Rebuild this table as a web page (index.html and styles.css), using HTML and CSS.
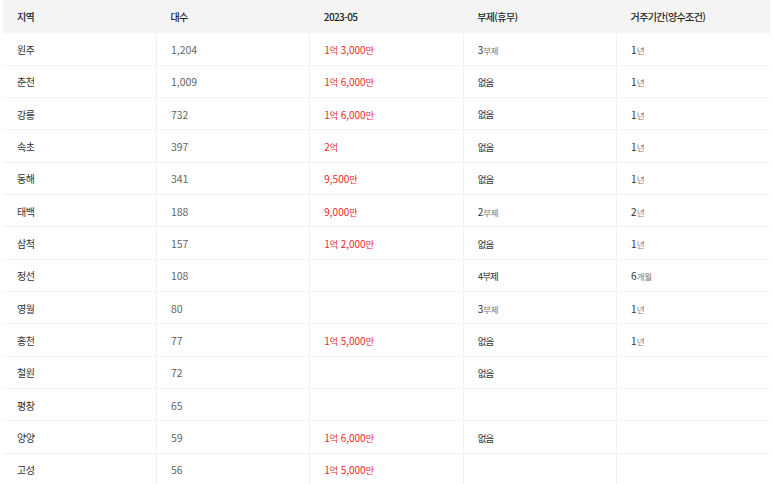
FILE: index.html
```html
<!DOCTYPE html>
<html lang="ko">
<head>
<meta charset="utf-8">
<link rel="stylesheet" href="styles.css">
</head>
<body>
<table class="tbl">
  <thead>
    <tr><th>지역</th><th>대수</th><th>2023-05</th><th>부제(휴무)</th><th>거주기간(양수조건)</th></tr>
  </thead>
  <tbody>
    <tr><td class="rg">원주</td><td class="num">1,204</td><td class="price">1<small>억</small> 3,000<small>만</small></td><td class="dk">3<span class="u">부제</span></td><td class="dk">1<span class="u">년</span></td></tr>
    <tr><td class="rg">춘천</td><td class="num">1,009</td><td class="price">1<small>억</small> 6,000<small>만</small></td><td class="dk ko">없음</td><td class="dk">1<span class="u">년</span></td></tr>
    <tr><td class="rg">강릉</td><td class="num">732</td><td class="price">1<small>억</small> 6,000<small>만</small></td><td class="dk ko">없음</td><td class="dk">1<span class="u">년</span></td></tr>
    <tr><td class="rg">속초</td><td class="num">397</td><td class="price">2<small>억</small></td><td class="dk ko">없음</td><td class="dk">1<span class="u">년</span></td></tr>
    <tr><td class="rg">동해</td><td class="num">341</td><td class="price">9,500<small>만</small></td><td class="dk ko">없음</td><td class="dk">1<span class="u">년</span></td></tr>
    <tr><td class="rg">태백</td><td class="num">188</td><td class="price">9,000<small>만</small></td><td class="dk">2<span class="u">부제</span></td><td class="dk">2<span class="u">년</span></td></tr>
    <tr><td class="rg">삼척</td><td class="num">157</td><td class="price">1<small>억</small> 2,000<small>만</small></td><td class="dk ko">없음</td><td class="dk">1<span class="u">년</span></td></tr>
    <tr><td class="rg">정선</td><td class="num">108</td><td class="price"></td><td class="dk ko">4부제</td><td class="dk">6<span class="u">개월</span></td></tr>
    <tr><td class="rg">영월</td><td class="num">80</td><td class="price"></td><td class="dk">3<span class="u">부제</span></td><td class="dk">1<span class="u">년</span></td></tr>
    <tr><td class="rg">홍천</td><td class="num">77</td><td class="price">1<small>억</small> 5,000<small>만</small></td><td class="dk ko">없음</td><td class="dk">1<span class="u">년</span></td></tr>
    <tr><td class="rg">철원</td><td class="num">72</td><td class="price"></td><td class="dk ko">없음</td><td class="dk"></td></tr>
    <tr><td class="rg">평창</td><td class="num">65</td><td class="price"></td><td class="dk"></td><td class="dk"></td></tr>
    <tr><td class="rg">양양</td><td class="num">59</td><td class="price">1<small>억</small> 6,000<small>만</small></td><td class="dk ko">없음</td><td class="dk"></td></tr>
    <tr><td class="rg">고성</td><td class="num">56</td><td class="price">1<small>억</small> 5,000<small>만</small></td><td class="dk"></td><td class="dk"></td></tr>
  </tbody>
</table>
</body>
</html>
```
FILE: styles.css
```css
html, body {
  margin: 0;
  padding: 0;
  background: #fff;
}
body {
  font-family: "Noto Sans CJK KR", "Noto Sans", sans-serif;
  font-size: 10px;
  color: #333;
}
.tbl {
  width: 767px;
  margin: 0 3px;
  border-collapse: collapse;
  table-layout: fixed;
}
.tbl th {
  height: 33px;
  padding: 0 0 0 14px;
  background: #f4f4f4;
  text-align: left;
  font-weight: 500;
  color: #222;
  font-size: 10px;
  letter-spacing: -0.6px;
}
.tbl td {
  height: 32.33px;
  padding: 1px 0 0 14px;
  border-bottom: 1px solid #f3f3f3;
  border-left: 1px solid #f1f1f1;
  text-align: left;
  box-sizing: border-box;
}
.tbl td:first-child {
  border-left: none;
}
.rg { color: #333; letter-spacing: -0.5px; }
.num { color: #666; font-size: 10.5px; }
.price { color: #ee1f1f; font-size: 10px; }
.price small { font-size: 9px; color: #ee2a2a; letter-spacing: -0.3px; }
.dk { color: #333; font-size: 10px; }
.ko { letter-spacing: -0.8px; font-size: 9.5px; }
.dk .u { font-size: 8.5px; color: #777; letter-spacing: -0.3px; }
```
